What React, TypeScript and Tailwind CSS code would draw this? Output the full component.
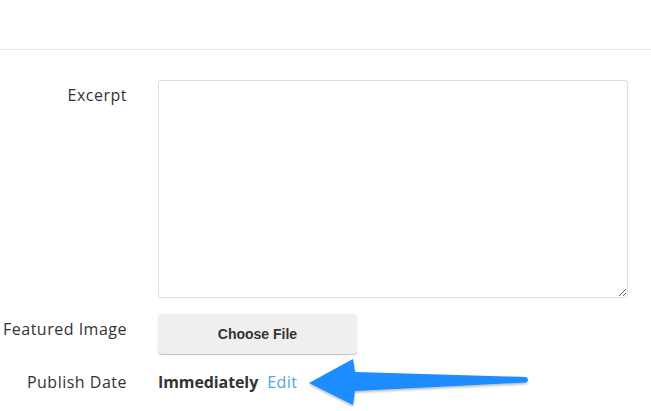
export default function App() {
  return (
    <div className="relative w-[651px] h-[411px] overflow-hidden bg-white font-['Open_Sans',sans-serif] text-[#333]">
      <div className="h-[50px] border-b border-[#e6e6e6]" />
      <div className="flex flex-col gap-4 pt-[30px]">
        <div className="flex gap-[31px]">
          <label className="w-[127px] shrink-0 pt-[5px] text-right text-[16px] leading-5 tracking-[0.5px]">Excerpt</label>
          <textarea className="h-[218px] w-[470px] rounded-[3px] border border-[#dedede] bg-white" />
        </div>
        <div className="flex items-start gap-[31px]">
          <label className="w-[127px] shrink-0 pt-[5px] text-right text-[16px] leading-5 tracking-[0.5px]">Featured Image</label>
          <button className="h-10 w-[199px] rounded-[4px] bg-[#efefef] font-['Liberation_Sans',sans-serif] text-[14px] font-bold text-[#333] shadow-[0_1px_1px_rgba(0,0,0,0.25)]">
            Choose File
          </button>
        </div>
        <div className="flex items-center gap-[31px] pt-[2px]">
          <label className="w-[127px] shrink-0 text-right text-[16px] leading-5 tracking-[0.5px]">Publish Date</label>
          <div className="flex items-center gap-[9px] text-[16px] leading-5">
            <span className="font-bold tracking-[-0.1px]">Immediately</span>
            <a className="tracking-[0.5px] text-[#4ea6dc]">Edit</a>
          </div>
        </div>
      </div>
      <svg className="absolute left-0 top-0" width="651" height="411" viewBox="0 0 651 411">
        <defs>
          <filter id="sh" x="-10%" y="-30%" width="120%" height="160%">
            <feDropShadow dx="0" dy="1.5" stdDeviation="1.2" floodColor="#000" floodOpacity="0.3" />
          </filter>
        </defs>
        <path
          d="M309 383 L353 359 L355 372 L526 377 Q530 379.5 526 382.5 L355 391 L353 405 Z"
          fill="#1a8cff"
          filter="url(#sh)"
        />
      </svg>
    </div>
  );
}
